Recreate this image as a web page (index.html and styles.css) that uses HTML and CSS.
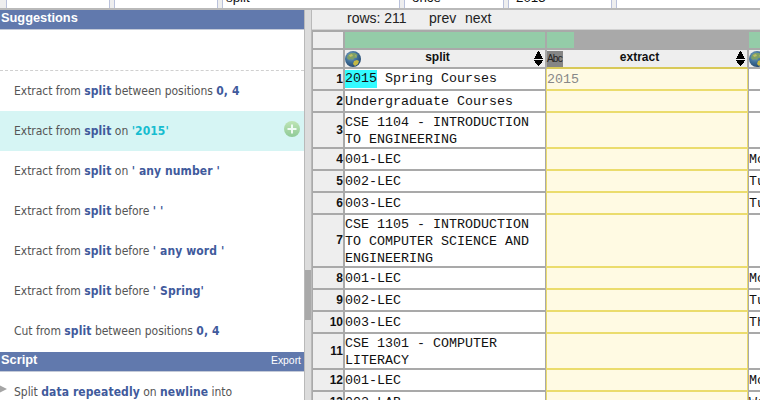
FILE: index.html
```
<!DOCTYPE html>
<html lang="en">
<head>
<meta charset="utf-8">
<title>Data transform</title>
<link rel="stylesheet" href="styles.css">
</head>
<body>
<svg class="defs" aria-hidden="true">
  <defs>
    <radialGradient id="sea" cx=".38" cy=".32" r=".7"><stop offset="0" stop-color="#83a9c2"/><stop offset=".55" stop-color="#3e6f99"/><stop offset="1" stop-color="#274a70"/></radialGradient>
    <linearGradient id="plus" x1="0" y1="0" x2="0" y2="1"><stop offset="0" stop-color="#bfe5b5"/><stop offset="1" stop-color="#8fca97"/></linearGradient>
    <symbol id="globe" viewBox="0 0 16 16">
      <circle cx="8" cy="8" r="8" fill="url(#sea)"/>
      <path d="M3 4L6 2l4 0 3 2-2 1 1 2-3 0-1 2-2-1-2 1-2-2z" fill="#7d9f68"/>
      <path d="M9 10l3-1 2 1-1 3-3 2-2-2z" fill="#c5b944"/>
      <path d="M4 4l3-1 1 2-3 1zM10 4l2 1-1 1z" fill="#c0be62"/>
    </symbol>
    <symbol id="sort" viewBox="0 0 9 15">
      <path d="M4 0h1v1h1v2h1v2h1v2h1v1H0V7h1V5h1V3h1V1h1zM0 9h9v1h-1v2h-1v1h-1v1h-1v1h-1v-1h-1v-1h-1v-1h-1v-2h-1z" fill="#000"/>
    </symbol>
  </defs>
</svg>
<div class="app">
  <div class="params">
    <div class="field f1"></div><div class="field f2"></div><div class="field f3">split</div><div class="field f4">once</div><div class="field f5">2015</div><div class="field f6"></div>
  </div>
  <div class="main">
    <div class="side">
      <div class="bar">Suggestions</div>
      <div class="blank"></div>
      <div class="sug"><span>Extract from </span><b>split</b><span> between positions </span><b>0, 4</b></div>
      <div class="sug on"><span>Extract from </span><b>split</b><span> on </span><b class="hit">'2015'</b><svg class="add" viewBox="0 0 16 16"><circle cx="8" cy="8" r="8" fill="url(#plus)"/><path d="M8 3.500v9M3.500 8h9" stroke="#f0fbf5" stroke-width="2"/></svg></div>
      <div class="sug"><span>Extract from </span><b>split</b><span> on </span><b>' any number '</b></div>
      <div class="sug"><span>Extract from </span><b>split</b><span> before </span><b>' '</b></div>
      <div class="sug"><span>Extract from </span><b>split</b><span> before </span><b>' any word '</b></div>
      <div class="sug"><span>Extract from </span><b>split</b><span> before </span><b>' Spring'</b></div>
      <div class="sug last"><span>Cut from </span><b>split</b><span> between positions </span><b>0, 4</b></div>
      <div class="bar">Script<small>Export</small></div>
      <div class="step"><svg class="tri" viewBox="0 0 7 8"><path d="M0 .500L7 4 0 7.500z" fill="#a5a5a5"/></svg><span>Split </span><b>data repeatedly</b><span> on </span><b>newline</b><span> into</span></div>
    </div>
    <div class="scroll"><div class="thumb"></div></div>
    <div class="data">
      <div class="pager"><span class="count">rows: 211</span><span class="prev">prev</span><span>next</span></div>
      <div class="grid">
        <div class="row meter"><div class="n"></div><div class="a full"></div><div class="e part"></div><div class="z full"></div></div>
        <div class="row head"><div class="n"></div><div class="a"><svg class="globe"><use href="#globe"/></svg><span>split</span><svg class="sort"><use href="#sort"/></svg></div><div class="e"><i class="abc">Abc</i><span>extract</span><svg class="sort"><use href="#sort"/></svg></div><div class="z"><svg class="globe"><use href="#globe"/></svg></div></div>
        <div class="row"><div class="n">1</div><div class="a"><p><mark>2015</mark> Spring Courses</p></div><div class="e">2015</div><div class="z"></div></div>
        <div class="row"><div class="n">2</div><div class="a">Undergraduate Courses</div><div class="e"></div><div class="z"></div></div>
        <div class="row tall"><div class="n">3</div><div class="a"><p>CSE 1104 - INTRODUCTION<br>TO ENGINEERING</p></div><div class="e"></div><div class="z"></div></div>
        <div class="row"><div class="n">4</div><div class="a">001-LEC</div><div class="e"></div><div class="z">Mo</div></div>
        <div class="row"><div class="n">5</div><div class="a">002-LEC</div><div class="e"></div><div class="z">Tu</div></div>
        <div class="row"><div class="n">6</div><div class="a">003-LEC</div><div class="e"></div><div class="z">Tu</div></div>
        <div class="row tall"><div class="n">7</div><div class="a"><p>CSE 1105 - INTRODUCTION<br>TO COMPUTER SCIENCE AND<br>ENGINEERING</p></div><div class="e"></div><div class="z"></div></div>
        <div class="row"><div class="n">8</div><div class="a">001-LEC</div><div class="e"></div><div class="z">Mo</div></div>
        <div class="row"><div class="n">9</div><div class="a">002-LEC</div><div class="e"></div><div class="z">Tu</div></div>
        <div class="row"><div class="n">10</div><div class="a">003-LEC</div><div class="e"></div><div class="z">Th</div></div>
        <div class="row tall"><div class="n">11</div><div class="a"><p>CSE 1301 - COMPUTER<br>LITERACY</p></div><div class="e"></div><div class="z"></div></div>
        <div class="row"><div class="n">12</div><div class="a">001-LEC</div><div class="e"></div><div class="z">Mo</div></div>
        <div class="row"><div class="n">13</div><div class="a">002-LAB</div><div class="e"></div><div class="z">We</div></div>
      </div>
    </div>
  </div>
</div>
</body>
</html>
```
FILE: styles.css
```
* { box-sizing: border-box; }
body { margin: 0; background: #fff; font-family: "Liberation Sans", Arial, sans-serif; overflow: hidden; }
.defs { position: absolute; width: 0; height: 0; }
.app { width: 760px; height: 400px; overflow: hidden; display: flex; flex-direction: column; }
.params { height: 10px; flex: none; display: flex; gap: 4px; padding-left: 6px; background: #eee; border-bottom: 2px solid #b9b9b9; overflow: hidden; }
.field { flex: none; height: 8px; padding: 0 0 3px 3px; background: #fff; border: solid #b9c1db; border-width: 0 1px; font-size: 13.33px; line-height: 15px; color: #111; display: flex; align-items: flex-end; overflow: hidden; }
.f1, .f2 { width: 104px; }
.f3 { width: 178px; }
.f4 { width: 100px; padding-left: 7px; }
.f5 { width: 104px; padding-left: 7px; }
.f6 { width: 160px; }

.main { height: 390px; display: flex; }
.side { width: 304px; height: 390px; flex: none; overflow: hidden; font: 12px/16px "DejaVu Sans Condensed", "DejaVu Sans", sans-serif; font-stretch: condensed; color: #555; }
.bar { height: 20px; background: #6179ad; border-bottom: 1px solid #c4cad8; color: #fff; font: bold 12.8px/15px "Liberation Sans", Arial, sans-serif; padding-left: 1px; display: flex; justify-content: space-between; }
.bar small { font-size: 10.4px; font-weight: normal; line-height: 18px; padding-right: 3px; }
.blank { height: 41px; border-bottom: 1px dashed #d0d0d0; }
.sug, .step { height: 40px; padding: 12px 0 0 14px; position: relative; white-space: pre; }
.side b { color: #3f5a9c; letter-spacing: .1px; }
.side span { letter-spacing: -.03px; }
.side b.hit { color: #16bdd0; }
.on { background: #d6f5f4; }
.last { height: 41px; }
.add { position: absolute; left: 284px; top: 10px; width: 16px; height: 16px; }
.tri { position: absolute; left: 0; top: 13px; width: 7px; height: 8px; }
.scroll { width: 8px; flex: none; background: #dcdcdc; border: solid #b9b9b9; border-width: 0 1px; padding-top: 260px; }
.thumb { height: 50px; background: #a9a9a9; }

.data { width: 448px; flex: none; overflow: hidden; }
.pager { height: 20px; background: #eee; border-bottom: 1px solid #d2d2d2; font-size: 14px; line-height: 17px; color: #222; padding-left: 35px; display: flex; }
.count { width: 82px; }
.prev { width: 36px; }
.grid { border-top: 2px solid #a9a9a9; }
.row { display: grid; grid-template-columns: 33px 202px 202px 200px; min-height: 22px; font: 13.33px/17px "Liberation Mono", "Courier New", monospace; color: #111; }
.row > div { border-bottom: 2px solid #a9a9a9; display: flex; align-items: center; white-space: pre; }
.row p { margin: 0; }
.tall p { margin: 1px 0 -1px; }
.row .n { background: #eee; border-left: 1px solid #a9a9a9; border-right: 2px solid #a9a9a9; justify-content: flex-end; font: bold 12px/17px "Liberation Sans", Arial, sans-serif; }
.row .a { border-right: 1px solid #a9a9a9; background: #fff; margin-right: 1px; }
.row .e { background: #fffae3; border-bottom-color: #ebdc6d; border-left: 1px solid #ebdc6d; border-right: 1px solid #ebdc6d; margin: 0 1px 0 -1px; color: #888; }
.row .z { border-left: 1px solid #a9a9a9; margin-left: -1px; background: #fff; }
.meter { height: 18px; min-height: 0; }
.row .full { background: #94cca8; }
.row .part { background: linear-gradient(90deg, #94cca8 27px, #a9a9a9 27px); }
.head { height: 19px; min-height: 0; font: bold 12px/14px "Liberation Sans", Arial, sans-serif; }
.meter .e, .head .e { border-color: #a9a9a9; }
.head .e { border-bottom-color: #d8c957; color: #111; }
.row.head > div { background-color: #eee; justify-content: space-between; }
.globe { width: 16px; height: 16px; }
.head .sort { width: 9px; height: 15px; margin-right: 2px; }
.head span { margin: 0 20px 3px 0; }
.abc { width: 16px; height: 16px; background: #858585; color: #222; font: 10px/16px "Liberation Sans", Arial, sans-serif; letter-spacing: -.8px; }
mark { background: #33fbff; color: #111; display: inline-block; height: 18px; }
```
